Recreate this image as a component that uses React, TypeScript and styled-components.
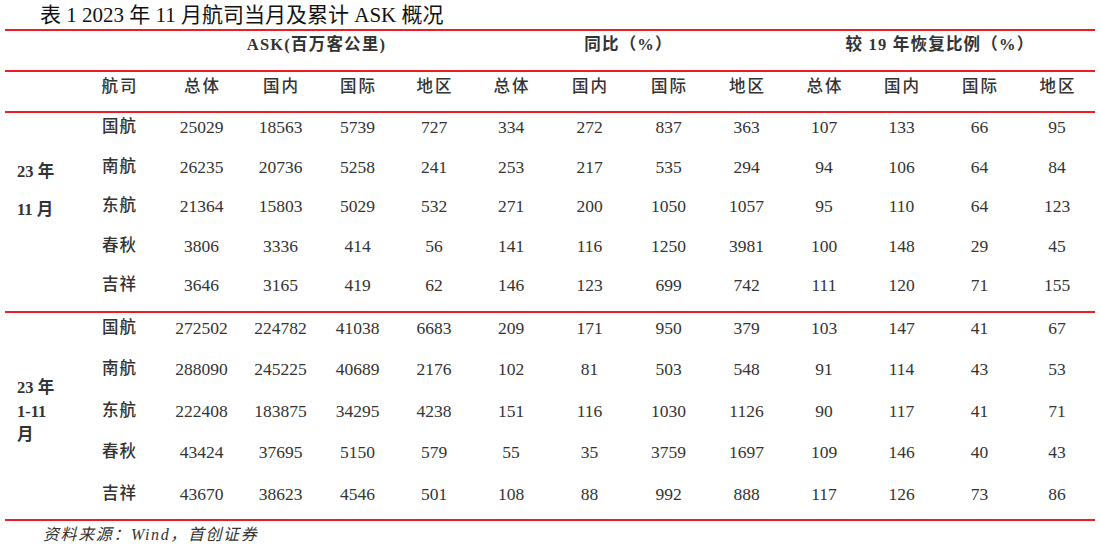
import React from "react";
import styled, { createGlobalStyle } from "styled-components";

const GlobalStyle = createGlobalStyle`
  html, body {
    margin: 0;
    padding: 0;
    background: #ffffff;
  }
  body {
    font-family: "Liberation Serif", "Noto Sans CJK SC", serif;
    color: #222;
  }
`;

const RED = "#ee1c25";
const COLS = "84px 81px 77px 77px 76px 78px 79px 79px 77px 78px 77px 79px 76px";

const Page = styled.div`
  width: 1101px;
  height: 548px;
  padding-left: 5px;
  box-sizing: border-box;
`;

const Title = styled.div`
  height: 29px;
  line-height: 31px;
  padding-left: 35px;
  font-size: 21px;
  color: #111;
  white-space: nowrap;
`;

const Table = styled.div`
  width: 1090px;
  border-bottom: 2px solid ${RED};
`;

const Section = styled.div`
  border-top: 2px solid ${RED};
`;

const GroupHeadRow = styled.div`
  display: grid;
  grid-template-columns: 72px ${COLS};
  height: 39px;
  align-items: start;
`;

const GroupHead = styled.div<{ $span: number }>`
  grid-column: span ${(p) => p.$span};
  text-align: center;
  font-weight: bold;
  font-size: 16.5px;
  line-height: 20px;
  padding-top: 4px;
  letter-spacing: 1.2px;
  color: #333;
  white-space: nowrap;
`;

const HeadRow = styled.div`
  display: grid;
  grid-template-columns: 72px ${COLS};
  height: 39px;
  align-items: start;
`;

const HeadCell = styled.div`
  text-align: center;
  font-weight: 500;
  font-size: 16.5px;
  line-height: 20px;
  padding-top: 5px;
  letter-spacing: 2px;
  text-indent: 2px;
  color: #333;
`;

const Group = styled.div<{ $height: number }>`
  display: flex;
  height: ${(p) => p.$height}px;
`;

const Label = styled.div<{ $top: number; $lh: number }>`
  width: 72px;
  flex: none;
  box-sizing: border-box;
  padding-left: 12px;
  padding-top: ${(p) => p.$top}px;
  font-weight: bold;
  font-size: 16.5px;
  line-height: ${(p) => p.$lh}px;
  color: #333;
`;

const Rows = styled.div`
  flex: 1;
  display: flex;
  flex-direction: column;
`;

const Row = styled.div<{ $height: number; $top: number }>`
  display: grid;
  grid-template-columns: ${COLS};
  height: ${(p) => p.$height}px;
  padding-top: ${(p) => p.$top}px;
  box-sizing: border-box;
  flex: none;
  align-items: start;
`;

const NameCell = styled.div`
  text-align: center;
  font-weight: 500;
  font-size: 16.5px;
  line-height: 20px;
  letter-spacing: 1px;
  text-indent: 1px;
  color: #333;
`;

const NumCell = styled.div`
  text-align: center;
  font-size: 17.5px;
  line-height: 20px;
  color: #333;
`;

const Source = styled.div`
  height: 27px;
  line-height: 28px;
  padding-left: 38px;
  font-size: 16px;
  font-style: italic;
  letter-spacing: 1.6px;
  color: #333;
`;

const subHeads = ["航司", "总体", "国内", "国际", "地区", "总体", "国内", "国际", "地区", "总体", "国内", "国际", "地区"];

type DataRow = [string, ...number[]];

const monthRows: DataRow[] = [
  ["国航", 25029, 18563, 5739, 727, 334, 272, 837, 363, 107, 133, 66, 95],
  ["南航", 26235, 20736, 5258, 241, 253, 217, 535, 294, 94, 106, 64, 84],
  ["东航", 21364, 15803, 5029, 532, 271, 200, 1050, 1057, 95, 110, 64, 123],
  ["春秋", 3806, 3336, 414, 56, 141, 116, 1250, 3981, 100, 148, 29, 45],
  ["吉祥", 3646, 3165, 419, 62, 146, 123, 699, 742, 111, 120, 71, 155],
];

const ytdRows: DataRow[] = [
  ["国航", 272502, 224782, 41038, 6683, 209, 171, 950, 379, 103, 147, 41, 67],
  ["南航", 288090, 245225, 40689, 2176, 102, 81, 503, 548, 91, 114, 43, 53],
  ["东航", 222408, 183875, 34295, 4238, 151, 116, 1030, 1126, 90, 117, 41, 71],
  ["春秋", 43424, 37695, 5150, 579, 55, 35, 3759, 1697, 109, 146, 40, 43],
  ["吉祥", 43670, 38623, 4546, 501, 108, 88, 992, 888, 117, 126, 73, 86],
];

function DataRows({ rows, height, top }: { rows: DataRow[]; height: number; top: number }) {
  return (
    <Rows>
      {rows.map(([name, ...nums]) => (
        <Row key={name} $height={height} $top={top}>
          <NameCell>{name}</NameCell>
          {nums.map((n, i) => (
            <NumCell key={i}>{n}</NumCell>
          ))}
        </Row>
      ))}
    </Rows>
  );
}

export default function App() {
  return (
    <Page>
      <GlobalStyle />
      <Title>表 1 2023 年 11 月航司当月及累计 ASK 概况</Title>
      <Table>
        <Section>
          <GroupHeadRow>
            <GroupHead $span={2} />
            <GroupHead $span={4}>ASK(百万客公里)</GroupHead>
            <GroupHead $span={4}>同比（%）</GroupHead>
            <GroupHead $span={4}>较 19 年恢复比例（%）</GroupHead>
          </GroupHeadRow>
        </Section>
        <Section>
          <HeadRow>
            <HeadCell />
            {subHeads.map((h, i) => (
              <HeadCell key={i}>{h}</HeadCell>
            ))}
          </HeadRow>
        </Section>
        <Section>
          <Group $height={198}>
            <Label $top={40} $lh={38}>
              23 年
              <br />
              11 月
            </Label>
            <DataRows rows={monthRows} height={39.6} top={4} />
          </Group>
        </Section>
        <Section>
          <Group $height={206}>
            <Label $top={63} $lh={23.5}>
              23 年
              <br />
              1-11
              <br />
              月
            </Label>
            <DataRows rows={ytdRows} height={41.5} top={4.5} />
          </Group>
        </Section>
      </Table>
      <Source>资料来源：Wind，首创证券</Source>
    </Page>
  );
}
